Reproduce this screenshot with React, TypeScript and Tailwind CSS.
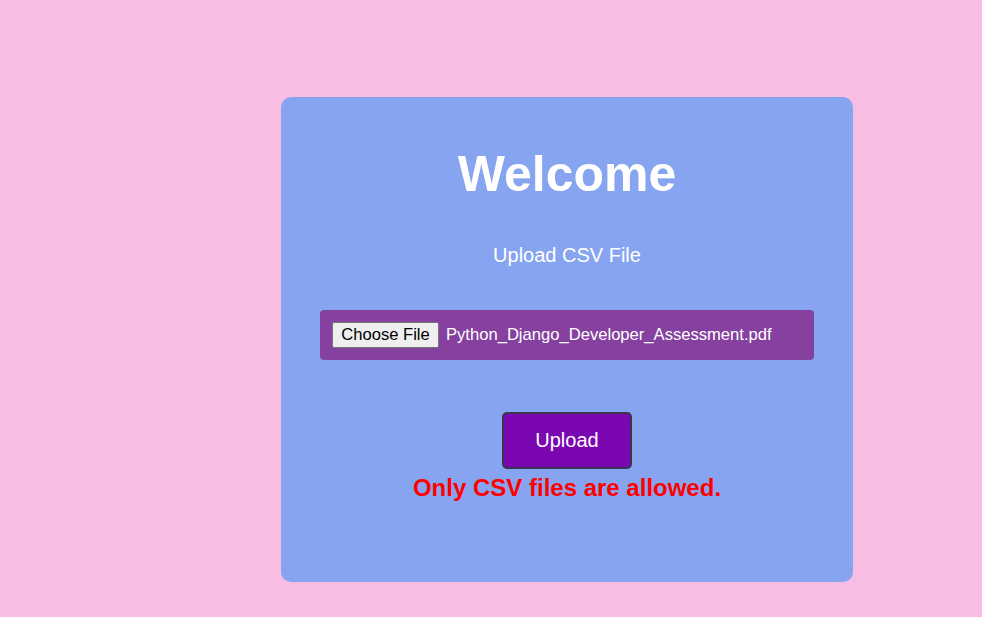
export default function App() {
  return (
    <div className="min-h-[617px] w-full bg-[#f7bde2] pt-[97px] font-['Liberation_Sans',Arial,sans-serif]">
      <div className="ml-[281px] flex h-[485px] w-[572px] flex-col items-center rounded-[10px] bg-[#86a4ef] pt-[52px]">
        <h1 className="text-[50px] font-bold leading-none text-white">Welcome</h1>
        <p className="mt-[46px] text-[20px] leading-none text-white">Upload CSV File</p>

        {/* file picker */}
        <div className="mt-[45px] flex h-[50px] w-[494px] items-center gap-[7px] rounded-[4px] bg-[#8540a0] px-[12px]">
          <button className="h-[26px] w-[107px] rounded-[2px] border border-[#767676] bg-[#efefef] text-[16.6px] leading-none text-black">
            Choose File
          </button>
          <span className="text-[16.6px] leading-none text-white">Python_Django_Developer_Assessment.pdf</span>
        </div>

        <button className="mt-[52px] h-[57px] w-[130px] rounded-[5px] border-2 border-[#3a3550] bg-[#7b07b1] pb-[2px] text-[20px] leading-none text-white">
          Upload
        </button>
        <p className="mt-[7px] text-[24px] font-bold leading-none text-[#f00]">Only CSV files are allowed.</p>
      </div>
    </div>
  );
}
